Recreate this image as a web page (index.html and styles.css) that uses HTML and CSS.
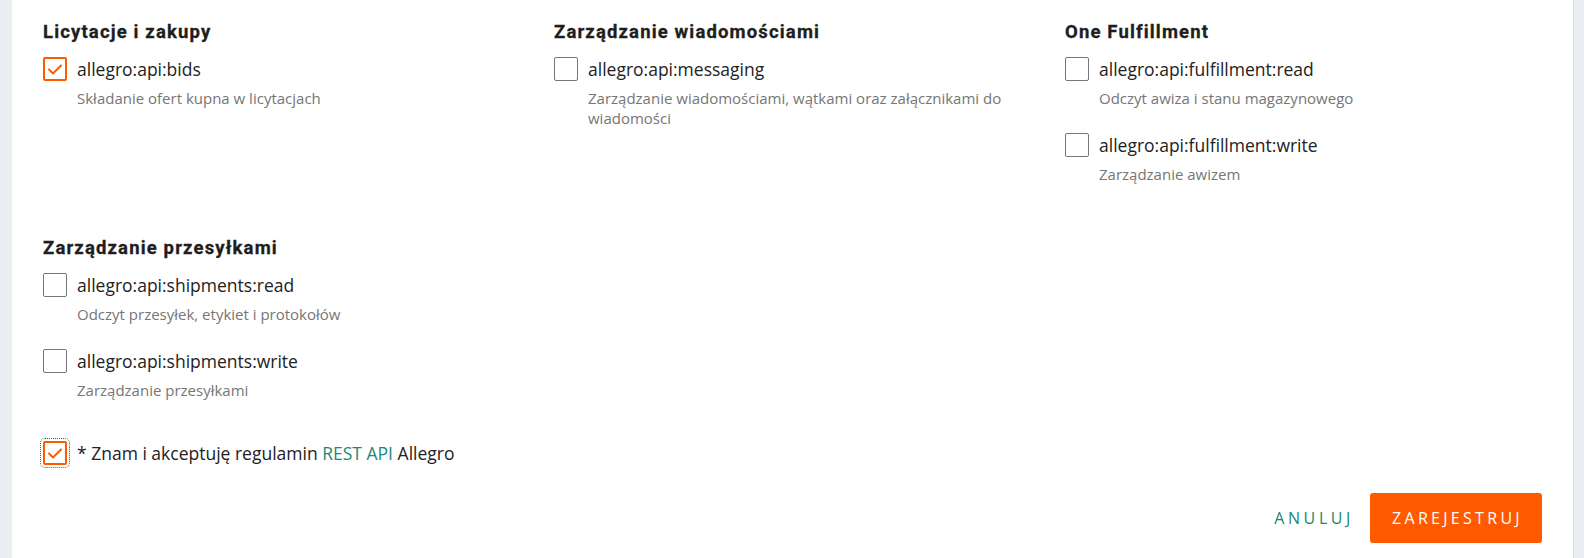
FILE: index.html
```html
<!DOCTYPE html>
<html lang="pl">
<head>
<meta charset="utf-8">
<title>Rejestracja aplikacji</title>
<link rel="stylesheet" href="styles.css">
</head>
<body>
<div class="panel">
  <div class="groups">
    <section class="group">
      <h3 class="group-title">Licytacje i zakupy</h3>
      <div class="items">
        <div class="item">
          <span class="box checked"><svg viewBox="0 0 24 24"><polyline points="6,12.5 10,16.5 18,8.5"/></svg></span>
          <span class="label">allegro:api:bids</span>
          <span class="desc">Składanie ofert kupna w licytacjach</span>
        </div>
      </div>
    </section>
    <section class="group">
      <h3 class="group-title">Zarządzanie wiadomościami</h3>
      <div class="items">
        <div class="item">
          <span class="box"></span>
          <span class="label">allegro:api:messaging</span>
          <span class="desc">Zarządzanie wiadomościami, wątkami oraz załącznikami do wiadomości</span>
        </div>
      </div>
    </section>
    <section class="group">
      <h3 class="group-title">One Fulfillment</h3>
      <div class="items">
        <div class="item">
          <span class="box"></span>
          <span class="label">allegro:api:fulfillment:read</span>
          <span class="desc">Odczyt awiza i stanu magazynowego</span>
        </div>
        <div class="item">
          <span class="box"></span>
          <span class="label">allegro:api:fulfillment:write</span>
          <span class="desc">Zarządzanie awizem</span>
        </div>
      </div>
    </section>
    <section class="group">
      <h3 class="group-title">Zarządzanie przesyłkami</h3>
      <div class="items">
        <div class="item">
          <span class="box"></span>
          <span class="label">allegro:api:shipments:read</span>
          <span class="desc">Odczyt przesyłek, etykiet i protokołów</span>
        </div>
        <div class="item">
          <span class="box"></span>
          <span class="label">allegro:api:shipments:write</span>
          <span class="desc">Zarządzanie przesyłkami</span>
        </div>
      </div>
    </section>
  </div>

  <div class="accept">
    <span class="box checked focused"><svg viewBox="0 0 24 24"><polyline points="6,12.5 10,16.5 18,8.5"/></svg></span>
    <span class="accept-text">* Znam i akceptuję regulamin <a class="link" href="#">REST API</a> Allegro</span>
  </div>

  <div class="actions">
    <button class="btn btn-text" type="button">Anuluj</button>
    <button class="btn btn-primary" type="button">Zarejestruj</button>
  </div>
</div>
</body>
</html>
```

FILE: styles.css
```css
* { box-sizing: border-box; }

html, body {
  margin: 0;
  padding: 0;
  height: 100%;
}

body {
  background: #eaeef2;
  font-family: "Open Sans", "Liberation Sans", sans-serif;
  color: #222222;
  overflow: hidden;
}

.panel {
  margin-left: 12px;
  width: 1561px;
  min-height: 558px;
  background: #ffffff;
  padding: 20px 31px 0 31px;
  box-shadow: 1px 0 1px rgba(0, 0, 0, 0.06);
}

.groups {
  display: grid;
  grid-template-columns: 477px 477px 477px;
  column-gap: 34px;
  row-gap: 52px;
}

.group-title {
  margin: 0 0 13px 0;
  font-family: Roboto, "Liberation Sans", sans-serif;
  font-weight: 700;
  font-size: 18.5px;
  line-height: 24px;
  letter-spacing: 1.15px;
  -webkit-text-stroke: 0.3px #1e1e1e;
  color: #1e1e1e;
}

.items {
  display: flex;
  flex-direction: column;
  gap: 25px;
}

.item {
  display: grid;
  grid-template-columns: 24px 1fr;
  column-gap: 10px;
  row-gap: 7px;
  align-items: center;
}

.box {
  width: 24px;
  height: 24px;
  border: 1px solid #767676;
  border-radius: 2px;
  background: #fff;
  display: block;
  position: relative;
}

.box.checked {
  border: 2px solid #ff5a00;
}

.box svg {
  position: absolute;
  left: -2px;
  top: -2px;
  width: 24px;
  height: 24px;
  fill: none;
  stroke: #ff5a00;
  stroke-width: 2;
  stroke-linecap: round;
  stroke-linejoin: round;
}

.box.focused {
  outline: 1px dotted #0d7a66;
  outline-offset: 2px;
}

.label {
  font-size: 17.5px;
  line-height: 24px;
  color: #222222;
}

.desc {
  grid-column: 2;
  font-size: 15px;
  line-height: 20px;
  color: #767676;
}

.accept {
  display: flex;
  align-items: center;
  gap: 10px;
  margin-top: 41px;
}

.accept-text {
  font-size: 17.5px;
  line-height: 24px;
  color: #222222;
}

.link {
  color: #1b8a78;
  text-decoration: none;
}

.actions {
  display: flex;
  justify-content: flex-end;
  margin-top: 28px;
}

.btn {
  height: 50px;
  border: 0;
  border-radius: 3px;
  font-family: "Open Sans", "Liberation Sans", sans-serif;
  font-size: 16px;
  text-transform: uppercase;
  letter-spacing: 3.3px;
  cursor: pointer;
}

.btn-text {
  background: transparent;
  color: #1b8673;
  letter-spacing: 3.6px;
  padding: 0 16px 0 20px;
}

.btn-primary {
  background: #ff5a00;
  color: #ffffff;
  width: 172px;
  padding: 0 0 0 3px;
}
```
